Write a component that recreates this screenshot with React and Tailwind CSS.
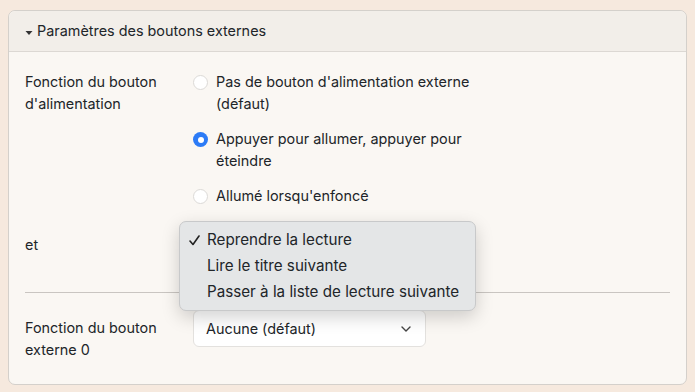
import React from "react";

function Radio({ checked }) {
  return checked ? (
    <span className="mt-[4px] flex h-[15px] w-[15px] shrink-0 items-center justify-center rounded-full bg-[#2c7bf6]">
      <span className="h-[6px] w-[6px] rounded-full bg-white" />
    </span>
  ) : (
    <span className="mt-[4px] h-[15px] w-[15px] shrink-0 rounded-full border border-[#dcdad7] bg-white" />
  );
}

export default function App() {
  const font = { fontFamily: "Inter, 'Noto Sans', sans-serif" };
  return (
    <div className="min-h-screen bg-[#f6e9de] px-[8px] pt-[10px] text-[#212529]" style={font}>
      <div className="relative w-[679px] rounded-[7px] border border-[#d4d0cb] bg-[#faf7f3]">
        <div className="flex h-[41px] items-center rounded-t-[7px] border-b border-[#dcd8d3] bg-[#f2eee9] px-[16px] text-[14.4px]">
          <svg width="8" height="6" viewBox="0 0 8 6" className="mr-[4px] mt-[3px]">
            <path d="M0.5 1 L7.5 1 L4 5 Z" fill="#333" />
          </svg>
          <span>Paramètres des boutons externes</span>
        </div>
        <div className="px-[16px] pb-[23px] pt-[19px] text-[14.4px] leading-[22px]">
          <div className="flex">
            <div className="w-[168px]">Fonction du bouton<br />d'alimentation</div>
            <div className="flex flex-col gap-[13px]">
              <div className="flex gap-[8px]">
                <Radio />
                <span className="w-[275px]">Pas de bouton d'alimentation externe (défaut)</span>
              </div>
              <div className="flex gap-[8px]">
                <Radio checked />
                <span className="w-[275px]">Appuyer pour allumer, appuyer pour éteindre</span>
              </div>
              <div className="flex gap-[8px]">
                <Radio />
                <span>Allumé lorsqu'enfoncé</span>
              </div>
            </div>
          </div>
          <div className="mt-[20px] flex">
            <div className="w-[168px] pt-[7px]">et</div>
            <div className="h-[37px] w-[233px] rounded-[6px] border border-[#dee2e6] bg-white" />
          </div>
          <div className="mt-[28px] h-px bg-[#c9c5c1]" />
          <div className="mt-[17px] flex">
            <div className="w-[168px] pt-[7px]">Fonction du bouton<br />externe 0</div>
            <div className="flex h-[37px] w-[233px] items-center justify-between rounded-[6px] border border-[#e3e1de] bg-white pl-[12px] pr-[14px]">
              <span>Aucune (défaut)</span>
              <svg width="10" height="6" viewBox="0 0 10 6">
                <path d="M1 1 L5 5 L9 1" fill="none" stroke="#444" strokeWidth="1.4" strokeLinecap="round" strokeLinejoin="round" />
              </svg>
            </div>
          </div>
        </div>
        <div className="absolute left-[170px] top-[210px] w-[297px] rounded-[7px] border border-[#c8c9ca] bg-[#e4e6e7] py-[5px] text-[15.2px] leading-[26px] shadow-[0_6px_18px_rgba(0,0,0,0.18)]">
          <div className="flex items-center">
            <span className="flex w-[27px] justify-start pl-[9px]">
              <svg width="11" height="11" viewBox="0 0 11 11">
                <path d="M1 6 L4 9.5 L10 1" fill="none" stroke="#222" strokeWidth="1.6" strokeLinecap="round" strokeLinejoin="round" />
              </svg>
            </span>
            <span>Reprendre la lecture</span>
          </div>
          <div className="pl-[27px]">Lire le titre suivante</div>
          <div className="pl-[27px]">Passer à la liste de lecture suivante</div>
        </div>
      </div>
    </div>
  );
}
